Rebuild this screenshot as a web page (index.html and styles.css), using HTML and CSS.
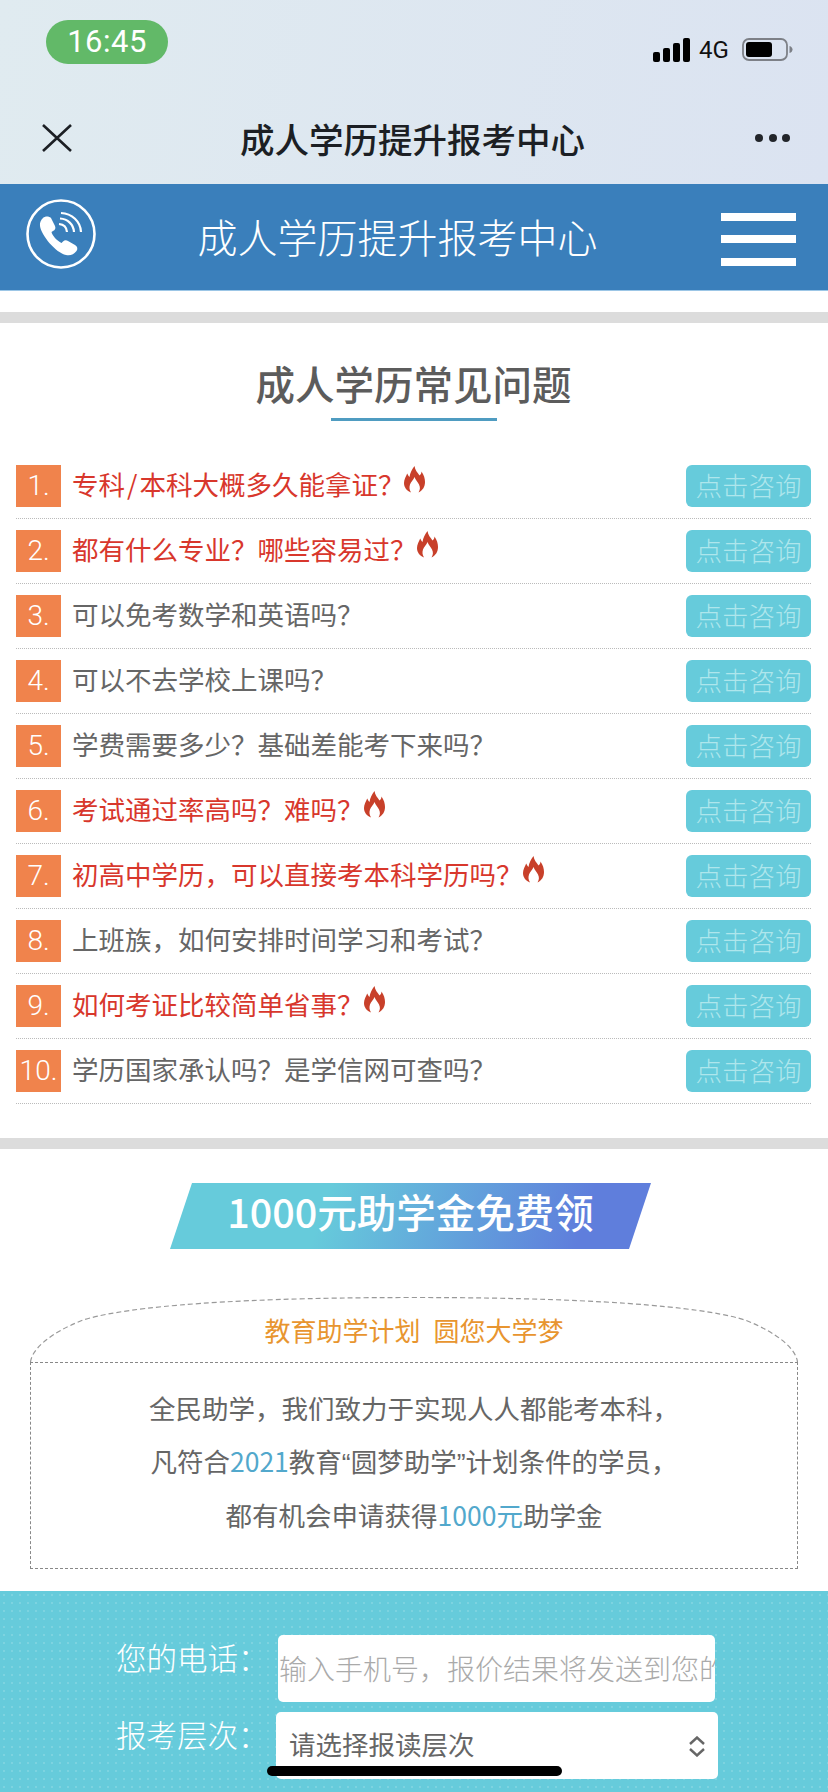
FILE: index.html
```html
<!DOCTYPE html>
<html lang="zh-CN">
<head>
<meta charset="utf-8">
<title>成人学历提升报考中心</title>
<link rel="stylesheet" href="styles.css">
</head>
<body>
<svg class="defs" width="0" height="0" aria-hidden="true"><symbol id="flame" viewBox="0 0 21 27"><path d="M10.500 0C11 4 13.500 6.500 15.500 9.500C16.500 8.500 17.500 7.500 17.500 5.500C20 9 21 12.500 21 16C21 21 18.500 24.500 14.500 26.500C16 24 16.500 21.500 15 18.500C13.500 15.500 11.500 14 10.500 11C9.500 14 7 15.500 6 18.500C5 21.500 5.500 24 7 26.500C3 25 0 21.500 0 17C0 13.500 2 10.500 3.200 7.500C4 9 4.500 10 5.500 11C6 7 8 3 10.500 0Z"/></symbol></svg>
<div class="phone">
  <header class="chrome">
    <div class="status">
      <div class="time">16:45</div>
      <div class="indicators">
        <svg class="signal" viewBox="0 0 37 24"><rect x="0" y="14" width="7" height="10" rx="2"/><rect x="10" y="10" width="7" height="14" rx="2"/><rect x="20" y="5" width="7" height="19" rx="2"/><rect x="30" y="0" width="7" height="24" rx="2"/></svg>
        <span class="net">4G</span>
        <svg class="battery" viewBox="0 0 51 23"><rect x="1" y="1" width="44" height="21" rx="6" fill="none" stroke="#7d8087" stroke-width="1.800"/><rect x="4" y="4" width="26" height="15" rx="3" fill="#000"/><path d="M47.500 8c2 .5 3 2 3 3.500s-1 3-3 3.500z" fill="#7d8087"/></svg>
      </div>
    </div>
    <div class="navbar">
      <svg class="close" viewBox="0 0 30 28"><path d="M1 1l28 26M29 1L1 27" fill="none" stroke="#1c1f24" stroke-width="2.600"/></svg>
      <div class="navtitle">成人学历提升报考中心</div>
      <div class="more"><i></i><i></i><i></i></div>
    </div>
  </header>

  <div class="topbar">
    <svg class="callicon" viewBox="0 0 70 70">
      <circle cx="35" cy="35" r="33.500" fill="none" stroke="#fff" stroke-width="2.600"/>
      <path d="M17 19C19 17 23 17 25 19L29 27C30 29.500 29 31 27 32L25.500 33C26 36 31 42 35.500 44L37 42.500C38.500 41 40.500 41 42 42L49 46C51.500 47.500 52 50 50.500 52C48 55.500 44 57 40 56C30 54 15 36 14 27C13.500 23.500 15 21 17 19Z" fill="#fff"/>
      <path d="M33 25c4.500.4 7.600 3.500 8 8M34 19.500c7.800.4 13.600 6 14 13.500M35 14c11 .4 19.600 8.800 20 19" fill="none" stroke="#fff" stroke-width="2.200"/>
    </svg>
    <div class="brand">成人学历提升报考中心</div>
    <div class="burger"><i></i><i></i><i></i></div>
  </div>

  <div class="gap"></div>

  <section class="faq">
    <h2 class="faq-title"><span>成人学历常见问题</span></h2>
    <ul class="faq-list">
      <li class="row hot"><span class="num">1.</span><span class="q">专科<span class="slash">/</span>本科大概多久能拿证&#xFF1F;</span><svg class="flame"><use href="#flame"/></svg><a class="btn">点击咨询</a></li>
      <li class="row hot"><span class="num">2.</span><span class="q">都有什么专业&#xFF1F;哪些容易过&#xFF1F;</span><svg class="flame"><use href="#flame"/></svg><a class="btn">点击咨询</a></li>
      <li class="row"><span class="num">3.</span><span class="q">可以免考数学和英语吗&#xFF1F;</span><a class="btn">点击咨询</a></li>
      <li class="row"><span class="num">4.</span><span class="q">可以不去学校上课吗&#xFF1F;</span><a class="btn">点击咨询</a></li>
      <li class="row"><span class="num">5.</span><span class="q">学费需要多少&#xFF1F;基础差能考下来吗&#xFF1F;</span><a class="btn">点击咨询</a></li>
      <li class="row hot"><span class="num">6.</span><span class="q">考试通过率高吗&#xFF1F;难吗&#xFF1F;</span><svg class="flame"><use href="#flame"/></svg><a class="btn">点击咨询</a></li>
      <li class="row hot"><span class="num">7.</span><span class="q">初高中学历&#xFF0C;可以直接考本科学历吗&#xFF1F;</span><svg class="flame"><use href="#flame"/></svg><a class="btn">点击咨询</a></li>
      <li class="row"><span class="num">8.</span><span class="q">上班族&#xFF0C;如何安排时间学习和考试&#xFF1F;</span><a class="btn">点击咨询</a></li>
      <li class="row hot"><span class="num">9.</span><span class="q">如何考证比较简单省事&#xFF1F;</span><svg class="flame"><use href="#flame"/></svg><a class="btn">点击咨询</a></li>
      <li class="row"><span class="num">10.</span><span class="q">学历国家承认吗&#xFF1F;是学信网可查吗&#xFF1F;</span><a class="btn">点击咨询</a></li>
    </ul>
  </section>

  <div class="divider"></div>

  <section class="grant">
    <div class="ribbon">1000元助学金免费领</div>
    <div class="plan">
      <div class="dome">
        <svg class="dome-line" viewBox="0 0 768 66"><path d="M.5 65C2 52 20 36 53 23C85 13 170 .5 384 .5C598 .5 683 13 715 23C748 36 766 52 767.500 65"/></svg>
        <span class="dome-text">教育助学计划 圆您大学梦</span>
      </div>
      <div class="plan-body">
        <p>全民助学&#xFF0C;我们致力于实现人人都能考本科&#xFF0C;</p>
        <p>凡符合<em>2021</em>教育<span class="mark">“</span>圆梦助学<span class="mark">”</span>计划条件的学员&#xFF0C;</p>
        <p>都有机会申请获得<em>1000元</em>助学金</p>
      </div>
    </div>
  </section>

  <section class="form">
    <div class="field first">
      <label class="label">您的电话&#xFF1A;</label>
      <div class="input"><span class="ph">输入手机号&#xFF0C;报价结果将发送到您的</span></div>
    </div>
    <div class="field second">
      <label class="label">报考层次&#xFF1A;</label>
      <div class="select"><span>请选择报读层次</span>
        <svg class="updown" viewBox="0 0 18 21"><path d="M2 8l7-6.500L16 8M2 13l7 6.500L16 13" fill="none" stroke="#666" stroke-width="2.400"/></svg>
      </div>
    </div>
  </section>

  <div class="home"></div>
</div>
</body>
</html>
```

FILE: styles.css
```css
* { box-sizing: border-box; }
html, body { margin: 0; padding: 0; }
body { width: 828px; height: 1792px; overflow: hidden; background: #fff; font-family: "Noto Sans CJK SC", "Liberation Sans", sans-serif; }
.defs { position: absolute; }
.phone { position: relative; width: 828px; height: 1792px; overflow: hidden; }

.chrome { height: 184px; background: linear-gradient(100deg, #e0ebf0 0%, #dbe3f1 100%); }
.status { height: 92px; display: flex; justify-content: space-between; padding: 20px 35px 0 46px; }
.time { width: 122px; height: 44px; border-radius: 22px; background: #62b968; color: #fff; font: 400 31px/44px Roboto, sans-serif; text-align: center; letter-spacing: .5px; }
.indicators { display: flex; align-items: center; height: 59px; }
.signal { width: 37px; height: 24px; fill: #000; }
.net { font: 400 24px/24px Roboto, sans-serif; color: #111; margin-left: 9px; width: 34px; }
.battery { width: 51px; height: 23px; margin-left: 9px; }
.navbar { height: 92px; display: flex; align-items: center; justify-content: space-between; padding: 0 38px 0 42px; }
.close { width: 30px; height: 28px; }
.navtitle { font-size: 34.500px; font-weight: 500; color: #1c1f24; line-height: 48px; margin-left: -2px; }
.more { display: flex; gap: 5.500px; }
.more i { width: 8px; height: 8px; border-radius: 50%; background: #22252a; }

.topbar { height: 107px; background: #3a7fbb; display: flex; align-items: center; justify-content: space-between; padding: 0 32px 0 26px; border-bottom: 1px solid #9cc6e6; }
.callicon { width: 70px; height: 70px; margin-top: -6px; }
.brand { font-size: 40px; font-weight: 300; color: #fff; line-height: 56px; margin: -2px 0 0 -22px; }
.burger { width: 75px; height: 53px; margin-top: 4px; display: flex; flex-direction: column; justify-content: space-between; }
.burger i { display: block; height: 8px; background: #fff; }

.gap { height: 21px; background: #fff; }

.faq { border-top: 11px solid #dcdcdc; padding: 0 17px 0 16px; height: 826px; }
.faq-title { margin: 0; padding-top: 31px; text-align: center; font-size: 39.500px; font-weight: 500; color: #5c5c5c; line-height: 57px; height: 96px; }
.faq-title span { display: inline-block; position: relative; }
.faq-title span::after { content: ""; position: absolute; left: 75px; width: 166px; top: 64px; height: 3px; background: #4f9cc1; }
.faq-list { list-style: none; margin: 0; padding: 46px 0 0; }
.row { height: 54px; margin-bottom: 11px; display: flex; align-items: flex-start; border-bottom: 1px dotted #bbb; color: #666; }
.row.hot { color: #d8372c; }
.num { width: 45px; height: 42px; background: #f0834c; color: #fff; font: 300 28px/42px Roboto, sans-serif; text-align: center; flex: none; }
.q { font-size: 26.500px; font-weight: 400; margin-left: 11px; line-height: 38px; }
.slash { padding: 0 2px; }
.flame { width: 23px; height: 27px; fill: #c8402a; margin-left: -1px; margin-top: 1px; }
.btn { margin-left: auto; width: 125px; height: 42px; border-radius: 6px; background: #66cbdb; color: #aee6ec; font-size: 26.500px; font-weight: 200; line-height: 40px; text-align: center; }

.divider { height: 11px; background: #dcdcdc; }

.grant { height: 442px; padding: 34px 30px 0; }
.ribbon { width: 481px; height: 66px; margin-left: 140px; background: linear-gradient(108deg, #66cbdb 0%, #66cbdb 32%, #5f7edc 85%); clip-path: polygon(22px 0, 100% 0, 459px 100%, 0 100%); color: #fff; font-size: 39.500px; font-weight: 500; line-height: 56px; text-align: center; white-space: nowrap; }
.plan { margin-top: 48px; width: 768px; }
.dome { position: relative; height: 65px; text-align: center; font-size: 26px; font-weight: 400; color: #e8952f; line-height: 40px; padding-top: 13px; word-spacing: 7px; }
.dome-line { position: absolute; left: 0; top: 0; width: 768px; height: 66px; fill: none; stroke: #999; stroke-width: 1.200; stroke-dasharray: 5 3; }
.dome-text { position: relative; }
.plan-body { height: 207px; border: 1px dashed #888; padding-top: 19px; }
.plan-body p { margin: 0; text-align: center; font-size: 26.500px; font-weight: 400; line-height: 52.500px; color: #666; }
.plan-body em { font-style: normal; color: #52a8cc; }
.mark { font-family: "Liberation Sans", sans-serif; }

.form { height: 201px; background-color: #66cbdb; background-image: radial-gradient(rgba(255,255,255,.15) 1px, transparent 1.300px); background-size: 8px 8px; color: #fff; }
.field { display: flex; align-items: flex-start; }
.first { padding: 44px 0 0 116px; height: 121px; }
.second { padding-left: 116px; }
.label { font-size: 30.500px; font-weight: 300; line-height: 44px; width: 162px; flex: none; white-space: nowrap; }
.second .label { margin-right: -2px; }
.input { width: 437px; height: 67px; background: #fff; border-radius: 5px; color: #aaa; font-size: 28px; font-weight: 300; line-height: 67px; overflow: hidden; white-space: nowrap; padding-left: 1px; }
.select { width: 442px; height: 67px; background: #fff; border-radius: 5px; color: #666; font-size: 26.500px; font-weight: 400; line-height: 50px; padding: 1px 12px 0 13px; display: flex; justify-content: space-between; align-items: center; }
.select span { padding-bottom: 5px; }
.updown { width: 18px; height: 21px; }
.home { position: absolute; left: 267px; top: 1766px; width: 295px; height: 10px; border-radius: 5px; background: #000; }
```
